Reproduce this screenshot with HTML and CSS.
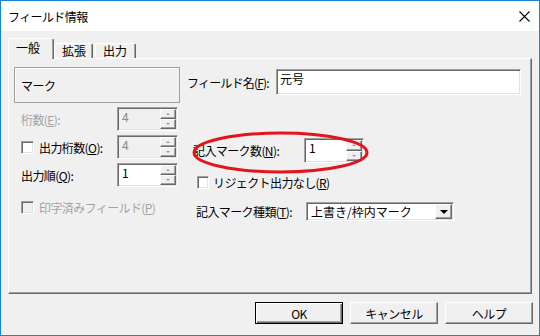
FILE: index.html
```html
<!DOCTYPE html>
<html lang="ja">
  <head>
    <meta charset="UTF-8" />
    <title>フィールド情報</title>
    <link rel="stylesheet" href="styles.css">
  </head>

  <body>
    <div class="window">
      <!-- Title bar -->
      <div class="titlebar">
        <span class="title">フィールド情報</span>
        <svg class="close" width="11" height="11" viewBox="0 0 11 11">
          <path d="M0.5 0.5L10.5 10.5M10.5 0.5L0.5 10.5" stroke="#000" stroke-width="1.1" fill="none" />
        </svg>
      </div>

      <div class="content">
        <!-- Tabs -->
        <div class="tabs">
          <div class="tab active">一般</div>
          <div class="tab tab-ext">拡張</div>
          <div class="tab tab-out">出力</div>
        </div>

        <!-- Tab page -->
        <div class="panel">
          <div class="col-left">
            <div class="mark-box">マーク</div>

            <div class="field-row disabled">
              <span class="label">桁数(<u>E</u>):</span>
              <div class="spin off">
                <span class="spin-val">4</span>
                <div class="spin-btns"><span class="up"></span><span class="down"></span></div>
              </div>
            </div>

            <div class="field-row">
              <span class="label with-check"><span class="checkbox"></span>出力桁数(<u>O</u>):</span>
              <div class="spin off">
                <span class="spin-val">4</span>
                <div class="spin-btns"><span class="up"></span><span class="down"></span></div>
              </div>
            </div>

            <div class="field-row">
              <span class="label">出力順(<u>Q</u>):</span>
              <div class="spin">
                <span class="spin-val">1</span>
                <div class="spin-btns"><span class="up"></span><span class="down"></span></div>
              </div>
            </div>

            <div class="check-row disabled">
              <span class="checkbox off"></span>印字済みフィールド(<u>P</u>)
            </div>
          </div>

          <div class="col-right">
            <div class="name-row">
              <span class="name-label">フィールド名(<u>F</u>):</span>
              <div class="textbox">元号</div>
            </div>

            <div class="count-row">
              <span class="count-label">記入マーク数(<u>N</u>):</span>
              <div class="spin count-spin">
                <span class="spin-val">1</span>
                <div class="spin-btns"><span class="up"></span><span class="down"></span></div>
              </div>
            </div>

            <div class="reject-row">
              <span class="checkbox small"></span>リジェクト出力なし(<u>R</u>)
            </div>

            <div class="kind-row">
              <span class="kind-label">記入マーク種類(<u>T</u>):</span>
              <div class="select">
                <span class="select-val">上書き/枠内マーク</span>
                <span class="select-btn"></span>
              </div>
            </div>
          </div>

          <!-- red annotation round the mark count -->
          <svg class="highlight" width="178" height="44" viewBox="0 0 178 44">
            <ellipse cx="88.5" cy="21.5" rx="86.5" ry="19.5" fill="none" stroke="#e3141c" stroke-width="3" />
          </svg>
        </div>

        <!-- Dialog buttons -->
        <div class="buttons">
          <button class="btn default">OK</button>
          <button class="btn">キャンセル</button>
          <button class="btn">ヘルプ</button>
        </div>
      </div>
    </div>
  </body>
</html>
```

FILE: styles.css
```css
* {
  box-sizing: border-box;
}

body {
  margin: 0;
  font-family: "Noto Sans CJK JP", "Noto Sans", sans-serif;
  font-size: 12px;
  color: #000;
}

u {
  text-decoration: underline;
  text-underline-offset: 1px;
}

.window {
  width: 540px;
  height: 336px;
  border: 1px solid #1883d7;
  background: #f0f0f0;
  display: flex;
  flex-direction: column;
}

/* Title bar */
.titlebar {
  height: 30px;
  flex: none;
  background: #fff;
  display: flex;
  align-items: center;
  justify-content: space-between;
  padding: 0 9px 0 7px;
}

.title {
  font-size: 12px;
  letter-spacing: -0.6px;
  color: #000;
}

.close {
  display: block;
}

.content {
  flex: 1;
  padding: 0 7px;
}

/* Tabs */
.tabs {
  height: 27px;
  display: flex;
  align-items: flex-end;
}

.tab {
  height: 15px;
  line-height: 14px;
  font-size: 12px;
  border-left: 1px solid #fff;
  border-top: 1px solid #fff;
  border-right: 1px solid #696969;
  box-shadow: inset -1px 0 0 #a0a0a0;
  border-radius: 2px 2px 0 0;
  padding-left: 7px;
}

.tab.active {
  height: 21px;
  width: 46px;
  margin-bottom: -1px;
  padding-top: 1px;
  padding-left: 7px;
  line-height: 15px;
  background: #f0f0f0;
  position: relative;
  z-index: 1;
}

.tab-ext {
  width: 39px;
}

.tab-out {
  width: 41px;
  margin-left: 2px;
}

/* Tab page */
.panel {
  position: relative;
  width: 524px;
  height: 236px;
  border: 1px solid;
  border-color: #fff #696969 #696969 #fff;
  box-shadow: inset -1px -1px 0 #a0a0a0;
  padding: 8px 0 0 5px;
  display: flex;
  gap: 7px;
}

.col-left {
  width: 166px;
  display: flex;
  flex-direction: column;
}

.mark-box {
  height: 36px;
  border: 1px solid #a0a0a0;
  box-shadow: inset 1px 1px 0 #fff;
  padding-left: 6px;
  display: flex;
  align-items: center;
  letter-spacing: -0.5px;
}

.field-row {
  height: 24px;
  margin-top: 4px;
  padding-left: 7px;
  display: flex;
  align-items: center;
}

.label {
  width: 96px;
  letter-spacing: -0.6px;
}

.with-check {
  display: flex;
  align-items: center;
}

.disabled,
.disabled .label {
  color: #a3a3a3;
}

/* Checkboxes */
.checkbox {
  display: inline-block;
  width: 13px;
  height: 13px;
  flex: none;
  margin-right: 5px;
  background: #fff;
  border: 1px solid;
  border-color: #a0a0a0 #fff #fff #a0a0a0;
  box-shadow: inset 1px 1px 0 #696969, inset -1px -1px 0 #e3e3e3;
}

.checkbox.off {
  background: #f0f0f0;
}

.checkbox.small {
  width: 12px;
  height: 13px;
  margin-right: 4px;
}

.check-row {
  margin-top: 14px;
  padding-left: 7px;
  height: 13px;
  display: flex;
  align-items: center;
  letter-spacing: -0.6px;
}

/* Spin boxes */
.spin {
  width: 61px;
  height: 24px;
  background: #fff;
  border: 1px solid;
  border-color: #a0a0a0 #fff #fff #a0a0a0;
  box-shadow: inset 1px 1px 0 #696969, inset -1px -1px 0 #e3e3e3;
  display: flex;
}

.spin.off {
  background: #f0f0f0;
  color: #8a8a8a;
}

.spin-val {
  flex: 1;
  padding: 1px 0 0 4px;
  line-height: 15px;
}

.spin-btns {
  width: 16px;
  margin: 1px 1px 1px 0;
  display: flex;
  flex-direction: column;
}

.spin-btns span {
  flex: 1;
  background: #f0f0f0;
  border: 1px solid;
  border-color: #fff #696969 #696969 #fff;
  box-shadow: inset -1px -1px 0 #a0a0a0;
  display: flex;
  align-items: center;
  justify-content: center;
}

.spin-btns .up::after {
  content: "";
  border-left: 2px solid transparent;
  border-right: 2px solid transparent;
  border-bottom: 2px solid #9a9a9a;
}

.spin-btns .down::after {
  content: "";
  border-left: 2px solid transparent;
  border-right: 2px solid transparent;
  border-top: 2px solid #9a9a9a;
}

/* Right column */
.col-right {
  flex: 1;
  padding-top: 2px;
  display: flex;
  flex-direction: column;
}

.name-row {
  height: 26px;
  display: flex;
  align-items: center;
}

.name-label {
  width: 89px;
  letter-spacing: -0.8px;
}

.textbox {
  width: 245px;
  height: 26px;
  background: #fff;
  border: 1px solid;
  border-color: #a0a0a0 #fff #fff #a0a0a0;
  box-shadow: inset 1px 1px 0 #696969, inset -1px -1px 0 #e3e3e3;
  padding: 1px 0 0 3px;
  line-height: 15px;
}

.count-row {
  margin-top: 43px;
  height: 25px;
  padding-left: 6px;
  display: flex;
  align-items: center;
}

.count-label {
  width: 111px;
  letter-spacing: -0.6px;
}

.count-spin {
  width: 60px;
  height: 25px;
}

.reject-row {
  margin-top: 13px;
  height: 13px;
  padding-left: 10px;
  display: flex;
  align-items: center;
  letter-spacing: -0.6px;
}

.kind-row {
  margin-top: 13px;
  height: 19px;
  padding-left: 9px;
  display: flex;
  align-items: center;
}

.kind-label {
  width: 110px;
  letter-spacing: -0.6px;
}

.select {
  width: 148px;
  height: 19px;
  background: #fff;
  border: 1px solid;
  border-color: #a0a0a0 #fff #fff #a0a0a0;
  box-shadow: inset 1px 1px 0 #696969, inset -1px -1px 0 #e3e3e3;
  display: flex;
  align-items: center;
  padding: 1px 1px 1px 4px;
}

.select-val {
  flex: 1;
  line-height: 15px;
}

.select-btn {
  width: 17px;
  height: 15px;
  background: #f0f0f0;
  border: 1px solid;
  border-color: #fff #696969 #696969 #fff;
  box-shadow: inset -1px -1px 0 #a0a0a0;
  display: flex;
  align-items: center;
  justify-content: center;
}

.select-btn::after {
  content: "";
  border-left: 4px solid transparent;
  border-right: 4px solid transparent;
  border-top: 4px solid #000;
}

/* Annotation */
.highlight {
  position: absolute;
  left: 183px;
  top: 72px;
}

/* Dialog buttons */
.buttons {
  margin-top: 8px;
  margin-right: -1px;
  display: flex;
  justify-content: flex-end;
  gap: 7px;
}

.btn {
  width: 88px;
  height: 22px;
  padding: 0;
  font-family: inherit;
  font-size: 12px;
  letter-spacing: -0.5px;
  color: #000;
  background: #f0f0f0;
  border: 1px solid;
  border-color: #fff #696969 #696969 #fff;
  box-shadow: inset -1px -1px 0 #a0a0a0;
}

.btn.default {
  border: 1px solid #000;
  box-shadow: inset 1px 1px 0 #fff, inset -1px -1px 0 #696969, inset -2px -2px 0 #a0a0a0;
}
```
